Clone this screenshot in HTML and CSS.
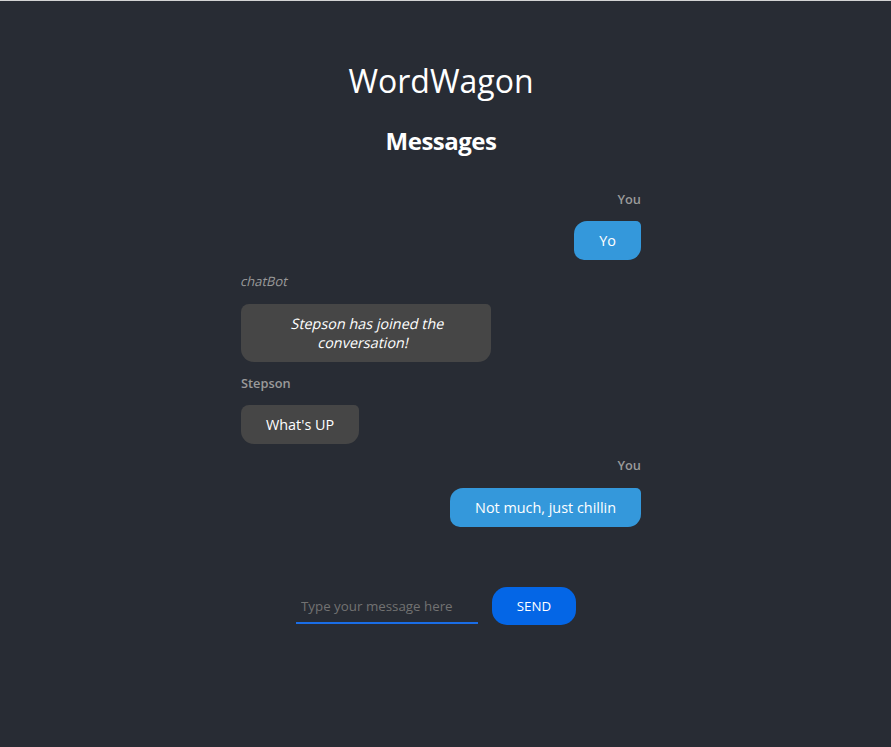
FILE: index.html
```html
<!DOCTYPE html>
<html lang="en">
<head>
<meta charset="utf-8">
<title>WordWagon</title>
<link rel="stylesheet" href="styles.css">
</head>
<body>
<div class="page">
  <h1 class="title">WordWagon</h1>
  <h2 class="subtitle">Messages</h2>
  <div class="chat">
    <div class="msg own">
      <div class="sender">You</div>
      <div class="bubble">Yo</div>
    </div>
    <div class="msg other">
      <div class="sender bot"><span class="slant">chatBot</span></div>
      <div class="bubble system"><span class="slant">Stepson has joined the conversation!</span></div>
    </div>
    <div class="msg other">
      <div class="sender">Stepson</div>
      <div class="bubble">What's UP</div>
    </div>
    <div class="msg own">
      <div class="sender">You</div>
      <div class="bubble">Not much, just chillin</div>
    </div>
  </div>
  <form class="composer">
    <input class="field" type="text" placeholder="Type your message here">
    <button class="send" type="button">SEND</button>
  </form>
</div>
</body>
</html>
```

FILE: styles.css
```css
html, body {
  margin: 0;
  padding: 0;
  background: #282c34;
}
body {
  font-family: "Open Sans", "DejaVu Sans", sans-serif;
  color: #ffffff;
}
.page {
  min-height: 746px;
  border-top: 1px solid #d4d4d4;
  padding-right: 9px;
  display: flex;
  flex-direction: column;
  align-items: center;
}
.title {
  font-size: 32px;
  font-weight: 400;
  margin: 58px 0 22px;
  line-height: 1.362;
}
.subtitle {
  font-size: 24px;
  font-weight: 700;
  letter-spacing: -0.5px;
  margin: 0 0 32.6px;
  line-height: 1.362;
}
.chat {
  width: 400px;
  display: flex;
  flex-direction: column;
  gap: 12px;
  margin-bottom: 60px;
}
.msg {
  display: flex;
  flex-direction: column;
}
.msg.own { align-items: flex-end; }
.msg.other { align-items: flex-start; }
.sender {
  font-size: 12.8px;
  font-weight: 600;
  line-height: 19px;
  color: #9a9a9a;
  margin-bottom: 12.5px;
}
.sender.bot {
  font-weight: 400;
  font-size: 13px;
}
.slant {
  display: inline-block;
  transform: skewX(-13deg);
}
.bubble {
  font-size: 14.4px;
  line-height: 19px;
  padding: 10px 25px;
  max-width: 200px;
  text-align: center;
}
.own .bubble {
  background: #3498db;
  border-radius: 13px 5px 13px 10px;
}
.other .bubble {
  background: #464646;
  border-radius: 8px 5px 13px 13px;
}
.bubble.system .slant {
  display: block;
}
.composer {
  display: flex;
  align-items: center;
  gap: 14px;
  margin: 0 10px 0 0;
}
.field {
  width: 182px;
  height: 37px;
  box-sizing: border-box;
  background: transparent;
  border: none;
  border-bottom: 2px solid #1a6de6;
  padding: 2px 5px 0;
  font-family: "Open Sans", "DejaVu Sans", sans-serif;
  font-size: 13.333px;
  color: #ffffff;
  outline: none;
}
.field::placeholder {
  color: #727272;
}
.send {
  width: 84px;
  height: 38px;
  border: none;
  border-radius: 15px;
  background: #0466e6;
  color: #ffffff;
  font-family: "Open Sans", "DejaVu Sans", sans-serif;
  font-size: 13.333px;
  cursor: pointer;
}
```
